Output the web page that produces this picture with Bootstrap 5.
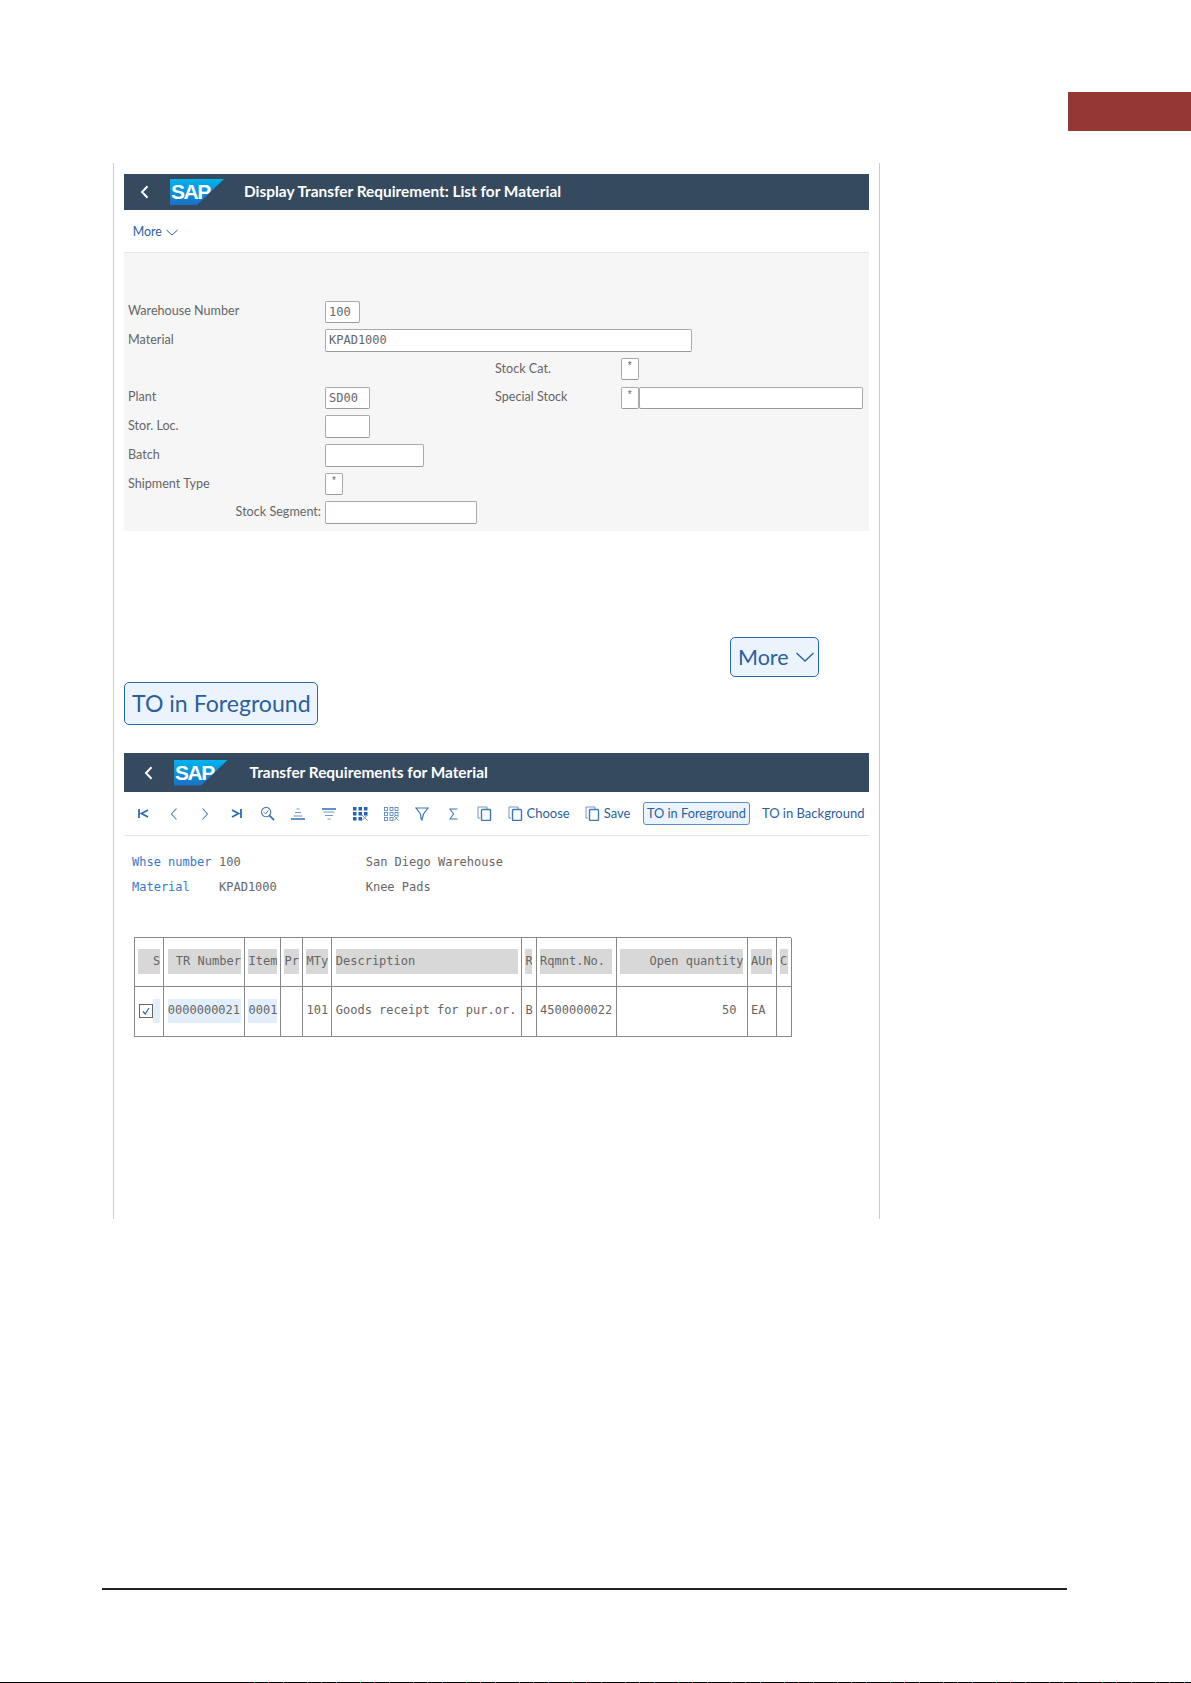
<!DOCTYPE html>
<html lang="en">
<head>
<meta charset="utf-8">
<title>Transfer Requirements for Material</title>
<link href="https://cdn.jsdelivr.net/npm/bootstrap@5.3.0/dist/css/bootstrap.min.css" rel="stylesheet">
<style>
html,body{margin:0;background:#fff}
body{height:1683px;overflow:hidden;position:relative;font-family:Lato,"Liberation Sans",sans-serif;color:#555}
.tab-red{position:absolute;right:0;top:92px;width:123px;height:39px;background:#953735}
.sheet{position:absolute;left:113px;top:163px;width:767px;height:1056px;border-left:1px solid #ccc;border-right:1px solid #ccc;padding:11px 10px 0 10px}
.shell{height:36px;background:#354a5f;color:#fff;font-weight:700;font-size:15.4px}
.shell.tall{height:39px}
.back{width:9px;height:14px;margin-left:16px;flex:none}
.logo{width:54px;height:26px;flex:none;margin-left:21px;clip-path:polygon(0 0,100% 0,50% 100%,0 100%);background:linear-gradient(180deg,#00b4ee,#1b6fc4);color:#fff;font:700 21px/26px "Liberation Sans",sans-serif;letter-spacing:-1.5px;padding-left:1px}
.ttl{margin-left:20px}
.tools{height:43px;padding:2px 0 0 8.7px;border-bottom:1px solid #e5e5e5;font-size:12.4px}
.linkish{color:#2c5f9e}
.panel{height:278px;background:#f6f6f6;padding-top:44.5px;font-size:12.6px;color:#666}
.frow{height:28.7px;padding-left:4px}
.lab1{width:197px;flex:none}
.lab1.end{text-align:right;padding-right:4px}
.fcol{width:170px;flex:none}
.lab2{width:125.6px;flex:none}
.fld{display:block;height:22.5px;background:#fff;border:1px solid #aaa;border-bottom-color:#999;border-radius:2px;font:12px/20px "DejaVu Sans Mono",monospace;padding-left:3px;color:#666}
.fld.ast{font:10px/14px "Liberation Sans",sans-serif;padding:0;text-align:center}
.w18{width:18px}.w35{width:35px}.w45{width:45px}.w99{width:98.5px}.w152{width:152px}.w224{width:224px}.w367{width:366.5px}
.bigwrap{margin-top:106px}
.hl-btn{display:inline-flex;align-items:center;background:#ebf4fd;border:1.5px solid #2a67a8;border-radius:5px;color:#2c5f9e;white-space:nowrap}
.more-big{margin-left:606px;width:89px;height:40px;font-size:21.5px;padding-left:7px;gap:7px}
.to-big{width:194px;height:43px;font-size:23.1px;padding-left:7px;margin-top:5px;display:flex}
.shell-b{margin-top:28px}
.iconbar{height:44px;padding-left:3.5px;border-bottom:1px solid #e5e5e5;color:#2c5f9e;font-size:13px}
.ic{width:31px;height:18px;flex:none;display:flex;justify-content:center;align-items:center}
.ic svg{display:block}
.tl{white-space:nowrap}
.tl.tuck{margin-left:-4px}
.to-small{height:23px;padding:0 3px;font-size:12.8px;margin-left:12.5px;border:1px solid #5b8fc5;border-radius:3px;width:107px}
.infos{font:12px/25px "DejaVu Sans Mono",monospace;padding:14px 0 0 8px;color:#666}
.infos>div{display:flex}
.k1{width:87px;color:#3a78c9}.k2{width:146.7px}
.tbl{margin:37px 0 0 10.2px;width:657px;display:grid;grid-template-columns:29.3px 80.7px 36px 22px 29.3px 189.7px 14.6px 80px 131px 29px 15.4px;grid-template-rows:49px 49.6px;border-top:1px solid #888;border-left:1px solid #888;font:12px/1 "DejaVu Sans Mono",monospace;color:#666}
.cl{border-right:1px solid #888;border-bottom:1px solid #888;display:flex;align-items:center;padding:0 3.3px;min-width:0;white-space:nowrap}
.hdr{display:block;width:100%;height:24.7px;line-height:24.7px;background:#d8d8d8;overflow:hidden;margin-top:-1px}
.hdr.rt,.val.rt{text-align:right}
.val{display:block;width:100%;height:23.7px;line-height:23.7px}
.sel{background:#e3eefb}
.cl.cb{padding-left:4px}
.chk{display:block;width:14px;height:14px;flex:none;background:#fff;border:1px solid #666}
.stripe{display:block;flex:1;height:23.7px;background:#e3eefb}
.foot{position:absolute;left:102px;top:1588px;width:964.5px;height:2px;background:#222}
.edge{position:absolute;left:0;right:0;bottom:0;height:1px;background:#000}
.edge-noise{position:absolute;left:237px;right:0;bottom:0;height:1px;background:repeating-linear-gradient(90deg,#000 0 17px,#4a7 17px 18px,#000 18px 31px,#c66 31px 32px,#000 32px 46px,#78a 46px 47px,#000 47px 53px)}
</style>
</head>
<body>
<div class="tab-red"></div>
<div class="sheet">
  <div class="shell d-flex align-items-center">
    <svg class="back" viewBox="0 0 9 14"><path d="M7.5 1.2 2 7l5.5 5.8" fill="none" stroke="#fff" stroke-width="2"/></svg>
    <div class="logo">SAP</div>
    <div class="ttl">Display Transfer Requirement: List for Material</div>
  </div>
  <div class="tools d-flex align-items-center"><span class="linkish">More</span>
    <svg class="ms-1" width="12" height="7" viewBox="0 0 12 7"><path d="M.5 1 6 6l5.5-5" fill="none" stroke="#2c5f9e"/></svg></div>
  <div class="panel">
    <div class="frow d-flex align-items-center"><div class="lab1">Warehouse Number</div><span class="fld w35">100</span></div>
    <div class="frow d-flex align-items-center"><div class="lab1">Material</div><span class="fld w367">KPAD1000</span></div>
    <div class="frow d-flex align-items-center"><div class="lab1"></div><div class="fcol"></div><div class="lab2">Stock Cat.</div><span class="fld ast w18">*</span></div>
    <div class="frow d-flex align-items-center"><div class="lab1">Plant</div><div class="fcol"><span class="fld w45">SD00</span></div><div class="lab2">Special Stock</div><span class="fld ast w18">*</span><span class="fld w224"></span></div>
    <div class="frow d-flex align-items-center"><div class="lab1">Stor. Loc.</div><span class="fld w45"></span></div>
    <div class="frow d-flex align-items-center"><div class="lab1">Batch</div><span class="fld w99"></span></div>
    <div class="frow d-flex align-items-center"><div class="lab1">Shipment Type</div><span class="fld ast w18">*</span></div>
    <div class="frow d-flex align-items-center"><div class="lab1 end">Stock Segment:</div><span class="fld w152"></span></div>
  </div>
  <div class="bigwrap">
    <div class="hl-btn more-big">More <svg width="18" height="10" viewBox="0 0 18 10"><path d="M.5 1 9 9l8.500-8" fill="none" stroke="#2c5f9e" stroke-width="1.300"/></svg></div>
    <div class="hl-btn to-big">TO in Foreground</div>
  </div>
  <div class="shell tall shell-b d-flex align-items-center">
    <svg class="back" style="margin-left:20px" viewBox="0 0 9 14"><path d="M7.500 1.200 2 7l5.500 5.800" fill="none" stroke="#fff" stroke-width="2"/></svg>
    <div class="logo">SAP</div>
    <div class="ttl" style="margin-left:21.5px">Transfer Requirements for Material</div>
  </div>
  <div class="iconbar d-flex align-items-center">
    <span class="ic"><svg width="11" height="9" viewBox="0 0 11 9"><path d="M1 0v9M10 1 3.500 4.500 10 8" fill="none" stroke="#2c6cb5" stroke-width="1.800"/></svg></span>
    <span class="ic"><svg width="8" height="12" viewBox="0 0 8 12"><path d="M6.500.5 1.500 6l5 5.500" fill="none" stroke="#4a7db5" stroke-width="1.100"/></svg></span>
    <span class="ic"><svg width="8" height="12" viewBox="0 0 8 12"><path d="m1.500.5 5 5.500-5 5.500" fill="none" stroke="#4a7db5" stroke-width="1.100"/></svg></span>
    <span class="ic"><svg width="11" height="9" viewBox="0 0 11 9"><path d="M10 0v9M1 1l6.500 3.500L1 8" fill="none" stroke="#2c6cb5" stroke-width="1.800"/></svg></span>
    <span class="ic"><svg width="15" height="15" viewBox="0 0 16 16"><circle cx="6.500" cy="6.500" r="5" fill="none" stroke="#4a7db5" stroke-width="1.200"/><path d="M10 10l5 5" stroke="#2c6cb5" stroke-width="1.800"/><path d="m4 6.500 2 2 3-4" fill="none" stroke="#4a7db5"/></svg></span>
    <span class="ic"><svg width="14" height="12" viewBox="0 0 14 12"><path d="M5.500 1h3M4 4.500h6M2.500 8h9" stroke="#6f98c5" fill="none"/><path d="M0 11h14" stroke="#2c6cb5" stroke-width="1.500"/></svg></span>
    <span class="ic"><svg width="14" height="12" viewBox="0 0 14 12"><path d="M0 1h14" stroke="#2c6cb5" stroke-width="1.500"/><path d="M1.500 4h11M3 7.500h8M5.500 11h3" stroke="#6f98c5" fill="none"/></svg></span>
    <span class="ic"><svg width="15" height="14" viewBox="0 0 15 14"><g fill="#1f63ad"><rect width="3.500" height="3.500"/><rect x="5.500" width="3.500" height="3.500"/><rect x="11" width="3.500" height="3.500"/><rect y="5" width="3.500" height="3.500"/><rect x="5.500" y="5" width="3.500" height="3.500"/><rect x="11" y="5" width="3.500" height="3.500"/><rect y="10" width="3.500" height="3.500"/><rect x="5.500" y="10" width="3.500" height="3.500"/></g><path d="m9 8 5.500 5.500M14.500 8 9 13.500" stroke="#6f98c5"/></svg></span>
    <span class="ic"><svg width="15" height="14" viewBox="0 0 15 14"><g fill="none" stroke="#4a7db5" stroke-width=".8"><rect x=".5" y=".5" width="3" height="3"/><rect x="6" y=".5" width="3" height="3"/><rect x="11" y=".5" width="3" height="3"/><rect x=".5" y="5.500" width="3" height="3"/><rect x="6" y="5.500" width="3" height="3"/><rect x="11" y="5.500" width="3" height="3"/><rect x=".5" y="10.500" width="3" height="3"/><rect x="6" y="10.500" width="3" height="3"/><path d="m10 9 4.500 4.500M14.500 9 10 13.500"/></g></svg></span>
    <span class="ic"><svg width="14" height="14" viewBox="0 0 14 14"><path d="M1 1h12L8.500 7l-1.500 6-1-1.500L5.500 7z" fill="none" stroke="#3f77b3" stroke-width="1.200"/></svg></span>
    <span class="ic"><svg width="9" height="12" viewBox="0 0 9 12"><path d="M8 1.500V1H1l3.500 5L1 11h7v-.5" fill="none" stroke="#3f77b3" stroke-width="1.100"/></svg></span>
    <span class="ic"><svg width="15" height="15" viewBox="0 0 15 15"><path d="M3 12H1V1h9v2" fill="none" stroke="#6f98c5"/><rect x="4.500" y="3.500" width="9" height="11" rx="1" fill="none" stroke="#3f77b3" stroke-width="1.400"/></svg></span>
    <span class="ic"><svg width="15" height="15" viewBox="0 0 15 15"><path d="M3 12H1V1h9v2" fill="none" stroke="#6f98c5"/><rect x="4.500" y="3.500" width="9" height="11" rx="1" fill="none" stroke="#3f77b3" stroke-width="1.400"/></svg></span>
    <span class="tl tuck">Choose</span>
    <span class="ic" style="margin-left:7px"><svg width="15" height="15" viewBox="0 0 15 15"><path d="M3 12H1V1h9v2" fill="none" stroke="#6f98c5"/><rect x="4.500" y="3.500" width="9" height="11" rx="1" fill="none" stroke="#3f77b3" stroke-width="1.400"/></svg></span>
    <span class="tl tuck">Save</span>
    <span class="hl-btn to-small">TO in Foreground</span>
    <span class="tl" style="margin-left:12px">TO in Background</span>
  </div>
  <div class="infos">
    <div><span class="k1">Whse number</span><span class="k2">100</span><span>San Diego Warehouse</span></div>
    <div><span class="k1">Material</span><span class="k2">KPAD1000</span><span>Knee Pads</span></div>
  </div>
  <div class="tbl">
    <div class="cl"><span class="hdr rt">S</span></div>
    <div class="cl"><span class="hdr rt">TR Number</span></div>
    <div class="cl"><span class="hdr">Item</span></div>
    <div class="cl"><span class="hdr">Pr</span></div>
    <div class="cl"><span class="hdr">MTy</span></div>
    <div class="cl"><span class="hdr">Description</span></div>
    <div class="cl"><span class="hdr">R</span></div>
    <div class="cl"><span class="hdr">Rqmnt.No.</span></div>
    <div class="cl"><span class="hdr rt">Open quantity</span></div>
    <div class="cl"><span class="hdr">AUn</span></div>
    <div class="cl"><span class="hdr">C</span></div>
    <div class="cl cb"><span class="chk"><svg width="12" height="12" viewBox="0 0 12 12" class="d-block"><path d="m3 6.500 2.200 2.500L9 3" fill="none" stroke="#1f63ad" stroke-width="1.200"/></svg></span><span class="stripe"></span></div>
    <div class="cl"><span class="val sel">0000000021</span></div>
    <div class="cl"><span class="val sel">0001</span></div>
    <div class="cl"></div>
    <div class="cl"><span class="val rt">101</span></div>
    <div class="cl"><span class="val">Goods receipt for pur.or.</span></div>
    <div class="cl"><span class="val">B</span></div>
    <div class="cl"><span class="val">4500000022</span></div>
    <div class="cl"><span class="val rt" style="padding-right:7px">50</span></div>
    <div class="cl"><span class="val">EA</span></div>
    <div class="cl"></div>
  </div>
</div>
<div class="foot"></div>
<div class="edge"></div>
<div class="edge-noise"></div>
<script src="https://cdn.jsdelivr.net/npm/bootstrap@5.3.0/dist/js/bootstrap.bundle.min.js"></script>
</body>
</html>
